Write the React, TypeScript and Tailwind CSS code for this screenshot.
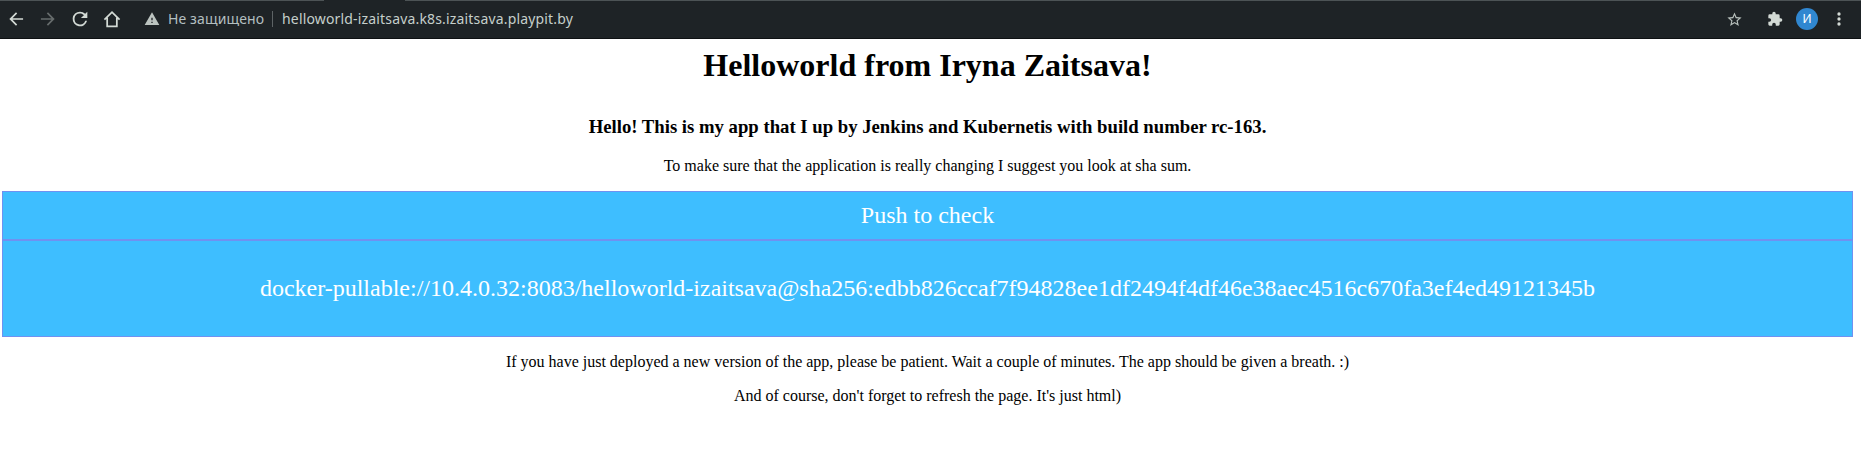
import React from "react";

function Toolbar() {
  return (
    <div className="flex h-[39px] flex-col border-b border-[#0e1113] bg-[#1e2326]">
      <div className="flex h-px shrink-0 justify-start">
        <div className="w-[324px] bg-[#4c5355]" />
        <div className="w-[81px]" />
        <div className="flex-1 bg-[#4c5355]" />
      </div>
      <div className="flex h-[36px] items-center pl-[6px] pr-[12px] text-[#d3dad5]">
        <svg viewBox="0 0 24 24" className="h-5 w-5 shrink-0" fill="currentColor"><path d="M20.500 11H7.830l5.590-5.590L12 4l-8 8 8 8 1.410-1.410L7.830 13H20.500v-2z" /></svg>
        <svg viewBox="0 0 24 24" className="ml-[12px] h-5 w-5 shrink-0 text-[#666c6c]" fill="currentColor"><path d="M12 4l-1.410 1.410L16.170 11H3.500v2h12.670l-5.580 5.590L12 20l8-8z" /></svg>
        <svg viewBox="0 0 24 24" className="ml-[11px] h-[22px] w-[22px] shrink-0" fill="currentColor"><path d="M17.650 6.350A7.950 7.950 0 0 0 12 4a8 8 0 1 0 7.730 10h-2.080A6 6 0 1 1 12 6c1.660 0 3.140.690 4.220 1.780L13 11h7V4l-2.350 2.350z" /></svg>
        <svg viewBox="0 0 24 24" className="ml-[11px] h-5 w-5 shrink-0" fill="none" stroke="currentColor" strokeWidth="2.1"><path d="M2.900 12.800L12 3.800l9.100 9M6.200 10.500v10.200h11.600V10.500" /></svg>
        <svg viewBox="0 0 24 24" className="ml-[22px] h-4 w-4 shrink-0 text-[#bcc4c0]" fill="currentColor"><path d="M1 21h22L12 2 1 21zm12-3h-2v-2h2v2zm0-4h-2v-4h2v4z" /></svg>
        <span className="ml-2 w-[98px] whitespace-nowrap font-['Noto_Sans',sans-serif] text-[14px] leading-[20px] tracking-[0.12px] text-[#b3bfc0]">Не защищено</span>
        <div className="ml-[6px] h-4 w-px bg-[#5d6365]" />
        <span className="ml-[9px] flex-1 whitespace-nowrap font-['Noto_Sans',sans-serif] text-[14px] leading-[20px] tracking-[0.165px] text-[#c5cfcb]">helloworld-izaitsava.k8s.izaitsava.playpit.by</span>
        <svg viewBox="0 0 24 24" className="h-[17px] w-[17px] shrink-0 text-[#b8c0bc]" fill="currentColor"><path d="M22 9.24l-7.19-.62L12 2 9.19 8.63 2 9.24l5.46 4.73L5.82 21 12 17.27 18.18 21l-1.63-7.03L22 9.24zM12 15.4l-3.76 2.27 1-4.28-3.32-2.88 4.38-.38L12 6.1l1.71 4.04 4.38.38-3.32 2.88 1 4.28L12 15.4z" /></svg>
        <svg viewBox="0 0 24 24" className="ml-[24px] h-4 w-4 shrink-0" fill="currentColor"><path d="M20.5 11H19V7a2 2 0 0 0-2-2h-4V3.500a2.500 2.500 0 0 0-5 0V5H4a2 2 0 0 0-1.990 2v3.800H3.500a2.700 2.700 0 0 1 0 5.400H2V20a2 2 0 0 0 2 2h3.800v-1.500a2.700 2.700 0 0 1 5.400 0V22H17a2 2 0 0 0 2-2v-4h1.500a2.500 2.500 0 0 0 0-5z" /></svg>
        <div className="ml-[13px] flex h-[22px] w-[22px] shrink-0 items-center justify-center rounded-full bg-[#3087d0] font-['Noto_Sans',sans-serif] text-[12px] leading-none text-white">И</div>
        <svg viewBox="0 0 24 24" className="ml-[11px] h-5 w-5 shrink-0" fill="currentColor"><circle cx="12" cy="6" r="2" /><circle cx="12" cy="12" r="2" /><circle cx="12" cy="18" r="2" /></svg>
      </div>
    </div>
  );
}

export default function App() {
  return (
    <div className="h-[458px] w-full overflow-hidden bg-white font-['Liberation_Serif',serif] text-black">
      <Toolbar />
      <main className="ml-[2px] mr-[8px] pt-[8px] text-center text-[16px] leading-[18px]">
        <h1 className="text-[32px] font-bold leading-[37px]">Helloworld from Iryna Zaitsava!</h1>
        <h3 className="mt-[32px] text-[18.72px] font-bold leading-[22px]">Hello! This is my app that I up by Jenkins and Kubernetis with build number rc-163.</h3>
        <p className="mt-[19px]">To make sure that the application is really changing I suggest you look at sha sum.</p>
        <div className="mt-4 flex h-[49px] items-center justify-center border border-[#7091f0] bg-[#3ebeff] text-[24px] leading-[27px] text-white">Push to check</div>
        <div className="flex h-[97px] items-center justify-center border border-[#7091f0] bg-[#3ebeff] text-[24px] leading-[27px] text-white">docker-pullable://10.4.0.32:8083/helloworld-izaitsava@sha256:edbb826ccaf7f94828ee1df2494f4df46e38aec4516c670fa3ef4ed49121345b</div>
        <p className="mt-4">If you have just deployed a new version of the app, please be patient. Wait a couple of minutes. The app should be given a breath. :)</p>
        <p className="mt-4">And of course, don't forget to refresh the page. It's just html)</p>
      </main>
    </div>
  );
}
